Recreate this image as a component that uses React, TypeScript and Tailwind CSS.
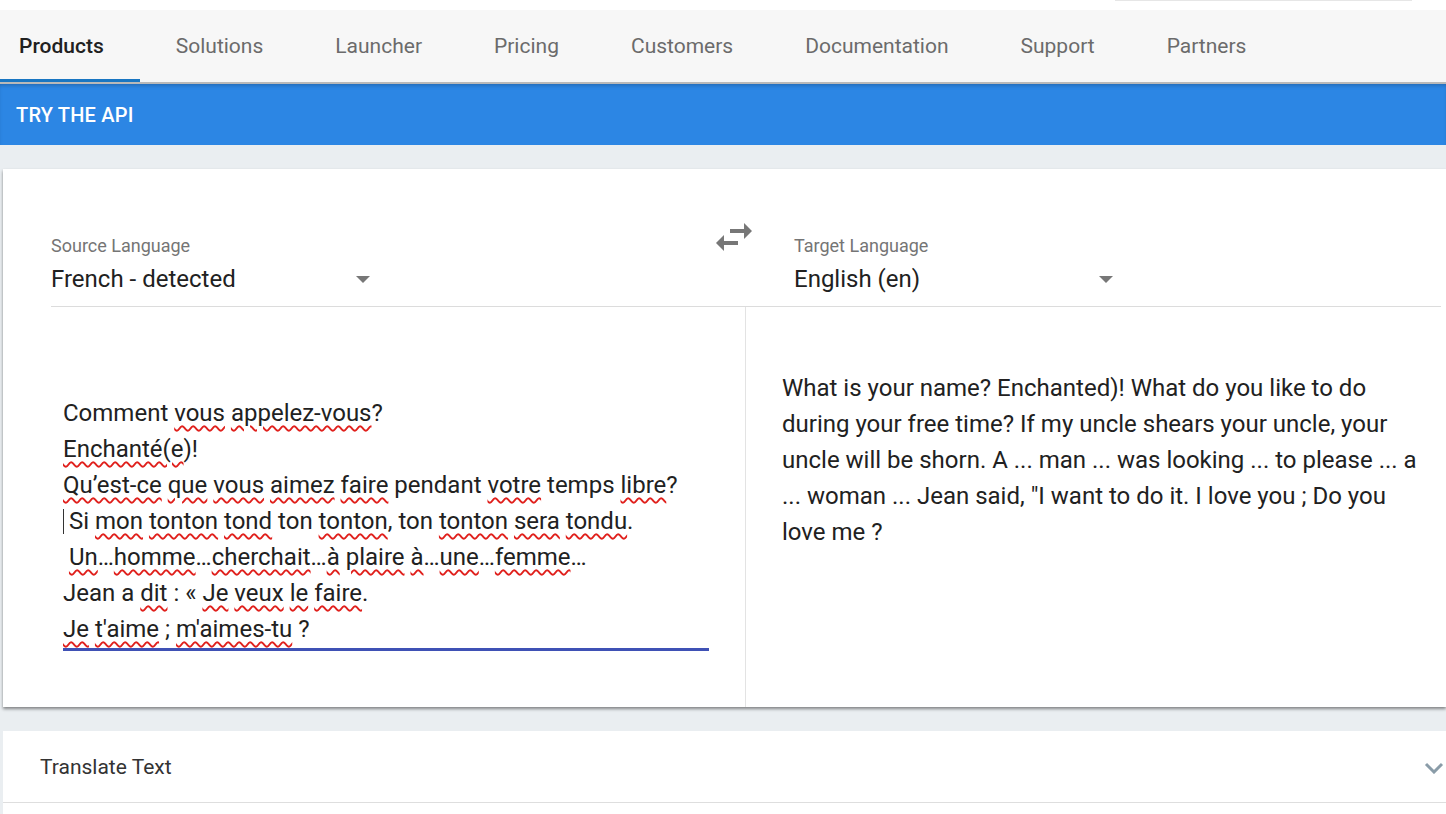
import React from 'react';

const tabs = ['Products', 'Solutions', 'Launcher', 'Pricing', 'Customers', 'Documentation', 'Support', 'Partners'];

// words flagged by the spellchecker are wrapped in [ ]
const sourceLines = [
  'Comment [vous] [appelez-vous]?',
  '[Enchanté(e])!',
  '[Qu’est-ce] [que] [vous] [aimez] [faire] pendant [votre] temps [libre]?',
  ' Si [mon] [tonton] [tond] ton [tonton], ton [tonton] [sera] [tondu].',
  ' [Un]…[homme]…[cherchait]…[à] [plaire] [à]…[une]…[femme]…',
  'Jean a [dit] : « [Je] [veux] [le] [faire].',
  '[Je] [t\'aime] ; [m\'aimes-tu] ?',
];

const SpellLine: React.FC<{ text: string; caret?: boolean }> = ({ text, caret }) => {
  const parts = text.split(/(\[[^\]]+\])/g).filter(Boolean);
  return (
    <div className="h-[36px] whitespace-pre relative">
      {caret && <span className="absolute left-0 top-[6px] h-[25px] w-px bg-[#333]" />}
      {parts.map((p, i) =>
        p.startsWith('[') ? (
          <span
            key={i}
            className="underline decoration-wavy decoration-[#e0201c] decoration-[1.5px] underline-offset-[4px]"
          >
            {p.slice(1, -1)}
          </span>
        ) : (
          <span key={i}>{p}</span>
        )
      )}
    </div>
  );
};

const DropArrow = () => (
  <svg width="14" height="7" viewBox="0 0 14 7" className="fill-[#777]">
    <path d="M0 0h14L7 7z" />
  </svg>
);

const LangSelect: React.FC<{ label: string; value: string }> = ({ label, value }) => (
  <div className="w-[319px]">
    <div className="text-[18px] leading-[20px] text-[#757575]">{label}</div>
    <div className="flex items-center justify-between mt-[11px] h-[24px]">
      <span className="text-[24px] leading-[24px] text-[#212121]">{value}</span>
      <DropArrow />
    </div>
  </div>
);

export default function App() {
  return (
    <div className="w-[1446px] h-[814px] overflow-hidden bg-[#eaeef1] font-['Roboto',sans-serif]">
      {/* top strip */}
      <div className="h-[10px] bg-white relative">
        <div className="absolute left-[1115px] top-0 w-[297px] h-px bg-[#e6e6e6]" />
      </div>

      {/* nav */}
      <nav className="h-[74px] bg-[#f7f7f7] flex items-stretch border-b-2 border-[#b9b9b9]">
        {tabs.map((t, i) => (
          <div
            key={t}
            className={
              i === 0
                ? 'pl-[19px] pr-[36px] flex items-center text-[21px] font-medium text-[#212121] border-b-[3px] border-[#1976c2] pt-[5px]'
                : 'px-[36px] flex items-center text-[21px] text-[#6b6b6b] pt-[2px]'
            }
          >
            {t}
          </div>
        ))}
      </nav>

      {/* try the api bar */}
      <div className="h-[61px] bg-[#2c86e4] flex items-center pl-[16px] shadow-[inset_0_3px_4px_-2px_rgba(0,0,0,0.25)]">
        <span className="text-white text-[20px] font-medium tracking-[0.2px]">TRY THE API</span>
      </div>

      {/* translator card */}
      <div className="mt-[24px] ml-[3px] h-[538px] bg-white shadow-[0_2px_3px_rgba(0,0,0,0.45)] flex flex-col">
        <div className="h-[138px] ml-[48px] mr-[5px] border-b border-[#dcdcdc] flex items-start pt-[67px]">
          <LangSelect label="Source Language" value="French - detected" />
          <div className="ml-[340px] -mt-[23px] w-[48px] h-[48px]">
            <svg width="48" height="48" viewBox="0 0 24 24" className="fill-[#777]">
              <path d="M6.99 11L3 15l3.99 4v-3H14v-2H6.99v-3zM21 9l-3.99-4v3H10v2h7.01v3L21 9z" />
            </svg>
          </div>
          <div className="ml-[36px]">
            <LangSelect label="Target Language" value="English (en)" />
          </div>
        </div>

        <div className="flex flex-1">
          <div className="w-[743px] shrink-0 border-r border-[#e3e3e3] pl-[60px] pr-[36px] pt-[88px]">
            <div className="text-[24px] leading-[36px] text-[#212121] border-b-[3px] border-[#3f51b5] pb-[1px]">
              {sourceLines.map((l, i) => (
                <SpellLine key={i} text={l} caret={i === 3} />
              ))}
            </div>
          </div>
          <div className="flex-1 min-w-0 pl-[36px] pt-[63px]">
            <p className="text-[24px] leading-[36px] text-[#212121] w-[645px]">
              What is your name? Enchanted)! What do you like to do during your free time? If my uncle shears your
              uncle, your uncle will be shorn. A ... man ... was looking ... to please ... a ... woman ... Jean said,
              "I want to do it. I love you ; Do you love me ?
            </p>
          </div>
        </div>
      </div>

      {/* translate text accordion */}
      <div className="mt-[24px] ml-[3px] bg-white">
        <div className="h-[72px] flex items-center justify-between pl-[37px] pr-[2px] pt-[2px] border-b border-[#dedede]">
          <span className="text-[21px] text-[#333]">Translate Text</span>
          <svg width="20" height="12" viewBox="0 0 20 12" fill="none" stroke="#8a9ca8" strokeWidth="3">
            <path d="M2 2l8 8 8-8" />
          </svg>
        </div>
        <div className="h-[20px]" />
      </div>
    </div>
  );
}
